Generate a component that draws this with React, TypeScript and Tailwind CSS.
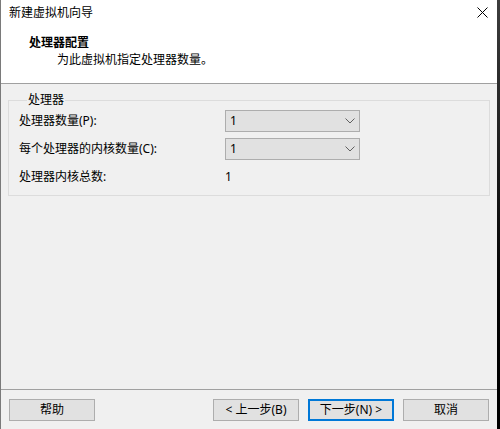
import React from "react"

const font = { fontFamily: '"Noto Sans", "Noto Sans CJK SC", sans-serif' }

function Chevron() {
  return (
    <svg width="10" height="6" viewBox="0 0 10 6" fill="none" className="text-[#606060]">
      <path d="M0.5 0.5L5 5L9.5 0.5" stroke="currentColor" strokeWidth="1" />
    </svg>
  )
}

function Select({ value }: { value: string }) {
  return (
    <div className="flex h-[22px] w-[135px] items-center justify-between border border-[#adadad] bg-[#e1e1e1] pl-[4px] pr-[4px]">
      <span className="leading-none">{value}</span>
      <Chevron />
    </div>
  )
}

function Button({ label, primary }: { label: string; primary?: boolean }) {
  return (
    <button
      className={
        primary
          ? "flex h-[22px] w-[86px] items-center justify-center border-2 border-[#0078d7] bg-[#e1e1e1] text-[12px] leading-none"
          : "flex h-[22px] w-[86px] items-center justify-center border border-[#adadad] bg-[#e1e1e1] text-[12px] leading-none"
      }
    >
      {label}
    </button>
  )
}

export default function App() {
  return (
    <div
      className="flex h-[429px] w-[500px] bg-[#f0f0f0] text-[12px] text-black"
      style={font}
    >
      <div className="w-[1px] bg-[#7a7a7a]" />
      <div className="flex w-[496px] flex-col">
        <div className="flex h-[84px] flex-col border-b border-[#a0a0a0] bg-white">
          <div className="flex h-[25px] items-center justify-between pl-[8px] pr-[9px]">
            <span className="leading-none">新建虚拟机向导</span>
            <svg width="11" height="11" viewBox="0 0 11 11" fill="none">
              <path d="M0.5 0.5L10.5 10.5M10.5 0.5L0.5 10.5" stroke="#000" strokeWidth="1" />
            </svg>
          </div>
          <div className="mt-[11px] pl-[28px] font-bold leading-[14px]">处理器配置</div>
          <div className="mt-[3px] pl-[56px] leading-[14px]">为此虚拟机指定处理器数量。</div>
        </div>

        <div className="flex flex-1 flex-col border-b border-[#a0a0a0] pt-[8px]">
          <fieldset className="mx-[7px] border border-[#dcdcdc] pb-[7px] pl-[10px] pt-[2px]">
            <legend className="ml-[8px] px-[1px] leading-[16px]">处理器</legend>
            <div className="flex flex-col gap-[6px]">
              <div className="flex h-[22px] items-center">
                <span className="w-[206px]">处理器数量(P):</span>
                <Select value="1" />
              </div>
              <div className="flex h-[22px] items-center">
                <span className="w-[206px]">每个处理器的内核数量(C):</span>
                <Select value="1" />
              </div>
              <div className="flex h-[22px] items-center">
                <span className="w-[206px]">处理器内核总数:</span>
                <span>1</span>
              </div>
            </div>
          </fieldset>
        </div>

        <div className="flex h-[39px] items-start pl-[8px] pr-[8px] pt-[9px]">
          <Button label="帮助" />
          <div className="ml-auto flex gap-[9px]">
            <Button label="< 上一步(B)" />
            <Button label="下一步(N) >" primary />
            <Button label="取消" />
          </div>
        </div>
      </div>
      <div className="w-[3px] bg-gradient-to-b from-[#3d3d3d] to-black" />
    </div>
  )
}
